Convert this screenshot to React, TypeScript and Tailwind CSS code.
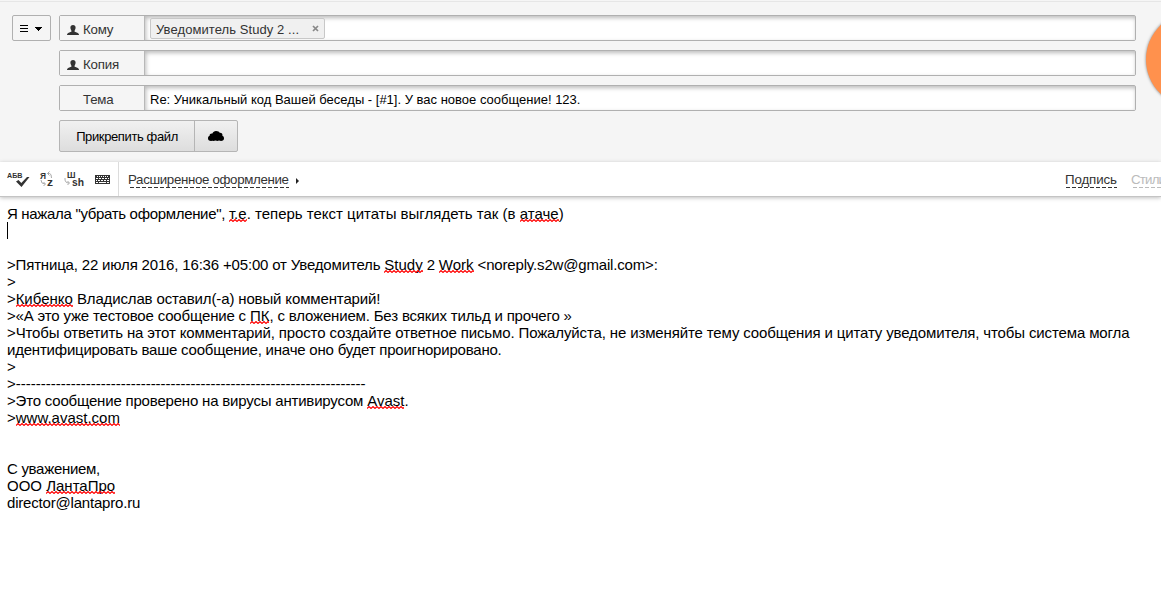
import React from "react";

const Person = () => (
  <svg width="12" height="10" viewBox="0 0 12 11" preserveAspectRatio="none" className="shrink-0" fill="#333">
    <path d="M6 0C4.300 0 3.400 1.100 3.400 2.800C3.400 4.300 4 5.300 4.400 6.200V7.500C3.500 8 1 8.600.4 9.600C.1 10 0 10.500 0 11H12C12 10.500 11.900 10 11.600 9.600C11 8.600 8.500 8 7.600 7.500V6.200C8 5.300 8.600 4.300 8.600 2.800C8.600 1.100 7.700 0 6 0Z" />
  </svg>
);

function Row({ label, icon, children }: { label: string; icon?: boolean; children?: React.ReactNode }) {
  return (
    <div className="flex h-[26px] w-[1077px] rounded-[2px] border border-[#b0b0b0]">
      <div className="flex w-[84px] shrink-0 items-center bg-[#f5f5f5] pl-[7px] text-[13.300px] text-[#333]">
        <span className="flex w-4 shrink-0 pt-[4px]">{icon && <Person />}</span>
        <span className="pt-[3px] text-[13.300px] leading-[16px] tracking-[-0.2px]">{label}</span>
      </div>
      <div className="flex grow items-center border-l border-[#b8b8b8] bg-white pl-[5px] shadow-[inset_1px_2px_4px_rgba(0,0,0,0.27)]">
        {children}
      </div>
    </div>
  );
}

const wave = "M0 2.500" + Array.from({ length: 60 }, (_, i) => `L${i * 4 + 2} 0.500L${i * 4 + 4} 2.500`).join("");

function Misspelled({ children }: { children: string }) {
  return (
    <span className="relative inline-block h-[17px] tracking-normal">
      {children}
      <svg className="absolute left-0 top-[14px] h-[3px] w-full overflow-hidden">
        <path d={wave} fill="none" stroke="#ff0000" strokeWidth="1.100" />
      </svg>
    </span>
  );
}

export default function App() {
  return (
    <div className="relative flex h-[612px] w-[1161px] flex-col overflow-hidden bg-white font-['Liberation_Sans',Arial,sans-serif] text-black">
      <header className="h-[162px] shrink-0 bg-[#f5f5f5] pt-px">
        <div className="h-px bg-[#e6e6e6]" />
        <div className="flex gap-2 pl-3 pt-[13px]">
          <button className="flex h-[26px] w-[39px] items-center justify-center rounded-[2px] border border-[#b0b0b0]">
            <svg width="23" height="9" viewBox="0 0 23 9" shapeRendering="crispEdges">
              <path d="M0 1h8v1h-8zM0 4h8v1h-8zM0 7h8v1h-8zM15 3h7v1h-7zM16 4h5v1h-5zM17 5h3v1h-3zM18 6h1v1h-1z" />
            </svg>
          </button>
          <div className="flex flex-col gap-[9px]">
            <Row label="Кому" icon>
              <span className="flex h-[21px] w-[175px] items-center justify-between rounded-[2px] border border-[#c8c8c8] bg-[#f0f0f0] pl-[5px] pr-[5px] text-[13px] text-[#333]">
                <span className="whitespace-nowrap pt-[3px] leading-[16px] tracking-[0.08px]">Уведомитель Study 2 ...</span>
                <svg width="7" height="7" viewBox="0 0 7 7" stroke="#888" strokeWidth="1.700"><path d="M1 1L6 6M6 1L1 6" /></svg>
              </span>
            </Row>
            <Row label="Копия" icon />
            <Row label="Тема">
              <span className="whitespace-nowrap pt-[3px] text-[13px] leading-[16px]">Re: Уникальный код Вашей беседы - [#1]. У вас новое сообщение! 123.</span>
            </Row>
            <div className="flex h-8 w-[179px] rounded-[2px] border border-[#b5b5b5] bg-linear-to-b from-[#f1f1f1] to-[#dddddd]">
              <button className="flex w-[135px] items-center justify-center whitespace-nowrap border-r border-[#b5b5b5] pt-[2px] text-[13px] tracking-[-0.38px]">Прикрепить файл</button>
              <button className="flex grow items-center justify-center pr-px">
                <svg width="16" height="10" viewBox="0 0 16 11" preserveAspectRatio="none"><path d="M3 11C1 11 0 9.800 0 8.200C0 6.800 .4 5.600 1.600 5.200C1.500 3.400 2.600 2.500 4.400 2.700C5 1 6.300 0 8 0C10 0 11.300 .8 11.600 2C13.600 1.800 14.800 3.300 14.400 5.200C15.600 5.700 16 6.900 16 8.200C16 9.800 14.900 11 13 11L11 10.500L9.500 11L7.500 10.500L5.500 11L4.500 10.600Z" /></svg>
              </button>
            </div>
          </div>
        </div>
      </header>
      <div className="flex h-[35px] shrink-0 items-stretch border-b border-[#c4c4c4] bg-white shadow-[0_1px_4px_rgba(0,0,0,0.25)]">
        <div className="flex w-[119px] shrink-0 border-r border-[#dcdcdc]">
          <svg width="118" height="34" viewBox="0 0 118 34" className="font-['Liberation_Sans',Arial,sans-serif] font-bold" fill="#333">
            <text x="7" y="16" fontSize="7.500" textLength="15.500" lengthAdjust="spacingAndGlyphs">АБВ</text>
            <path d="M16 19.500L18.500 18L21.300 21L27 15H29.500L21.500 25Z" />
            <text x="40" y="16.500" fontSize="8.500" textLength="6" lengthAdjust="spacingAndGlyphs">Я</text>
            <text x="47" y="24" fontSize="11" textLength="6" lengthAdjust="spacingAndGlyphs">z</text>
            <path d="M47.500 11.500H49.500Q51.500 11.500 51.500 16M49.500 9.500L47.500 11.500L49.500 13.500M41 18Q41 22 45 22M43.500 20L45.500 22L43.500 24" fill="none" stroke="#aaa" />
            <text x="67" y="16" fontSize="8.500" textLength="8.500" lengthAdjust="spacingAndGlyphs">Ш</text>
            <text x="72" y="24" fontSize="10.500" textLength="12" lengthAdjust="spacingAndGlyphs">sh</text>
            <path d="M65 16Q64.500 21 69 21M67.500 19L69.500 21L67.500 23" fill="none" stroke="#aaa" />
            <g shapeRendering="crispEdges">
              <path d="M95 13h15v9h-15z" />
              <path d="M97 14h1v1h-1zM99 14h1v1h-1zM101 14h1v1h-1zM103 14h1v1h-1zM105 14h1v1h-1zM107 14h1v1h-1zM96 16h2v1h-2zM99 16h2v1h-2zM102 16h2v1h-2zM105 16h2v1h-2zM108 16h1v1h-1zM96 18h1v1h-1zM98 18h2v1h-2zM101 18h2v1h-2zM104 18h2v1h-2zM107 18h2v1h-2zM96 20h2v1h-2zM99 20h7v1h-7zM107 20h2v1h-2z" fill="#fff" />
            </g>
          </svg>
        </div>
        <div className="flex grow items-center pl-[9px] text-[#333]">
          <svg width="175" height="26" viewBox="0 0 175 26">
            <text x="0" y="18" fontSize="13.300" textLength="161" fill="#333">Расширенное оформление</text>
            <path d="M2 21.500h159" stroke="#333" strokeDasharray="4 2" />
            <path d="M168 12L171 15L168 18Z" fill="#222" />
          </svg>
        </div>
        <svg width="97" height="34" viewBox="0 0 97 34" className="shrink-0 text-[13.300px]">
          <text x="1" y="22" textLength="52" fill="#333">Подпись</text>
          <path d="M2 25.500h51" stroke="#333" strokeDasharray="4 2" />
          <text x="67" y="22" textLength="35" fill="#bbb">Стили</text>
          <path d="M69 25.500h30" stroke="#bbb" strokeDasharray="4 2" />
        </svg>
      </div>
      <main className="whitespace-nowrap pl-[7px] pt-2 text-[15px] leading-[17px] [&>p]:h-[17px]">
        <p><span className="tracking-[-0.32px]">Я нажала "убрать оформление", </span><Misspelled>т.е</Misspelled>. теперь текст цитаты выглядеть так (в <Misspelled>атаче</Misspelled>)</p>
        <p><span className="block h-[17px] w-px bg-black" /></p>
        <p />
        <p className="tracking-[-0.17px]">&gt;Пятница, 22 июля 2016, 16:36 +05:00 от Уведомитель <Misspelled>Study</Misspelled> 2 <Misspelled>Work</Misspelled> &lt;noreply.s2w@gmail.com&gt;:</p>
        <p className="tracking-[-0.14px]">&gt;</p>
        <p className="tracking-[-0.14px]">&gt;<Misspelled>Кибенко</Misspelled> Владислав оставил(-а) новый комментарий!</p>
        <p className="tracking-[-0.17px]">&gt;«А это уже тестовое сообщение с <Misspelled>ПК</Misspelled>, с вложением. Без всяких тильд и прочего »</p>
        <p className="tracking-[-0.13px]">&gt;Чтобы ответить на этот комментарий, просто создайте ответное письмо. Пожалуйста, не изменяйте тему сообщения и цитату уведомителя, чтобы система могла</p>
        <p className="tracking-[-0.21px]">идентифицировать ваше сообщение, иначе оно будет проигнорировано.</p>
        <p>&gt;</p>
        <p>&gt;----------------------------------------------------------------------</p>
        <p className="tracking-[-0.19px]">&gt;Это сообщение проверено на вирусы антивирусом <Misspelled>Avast</Misspelled>.</p>
        <p>&gt;<Misspelled>www.avast.com</Misspelled></p>
        <p />
        <p />
        <p className="tracking-[-0.3px]">С уважением,</p>
        <p>ООО <Misspelled>ЛантаПро</Misspelled></p>
        <p className="tracking-[-0.19px]">director@lantapro.ru</p>
      </main>
      <div className="absolute left-[1146px] top-[12px] h-[95px] w-[95px] rounded-full bg-[#ff914d] shadow-[0_0_3px_rgba(0,0,0,0.5)]" />
    </div>
  );
}
